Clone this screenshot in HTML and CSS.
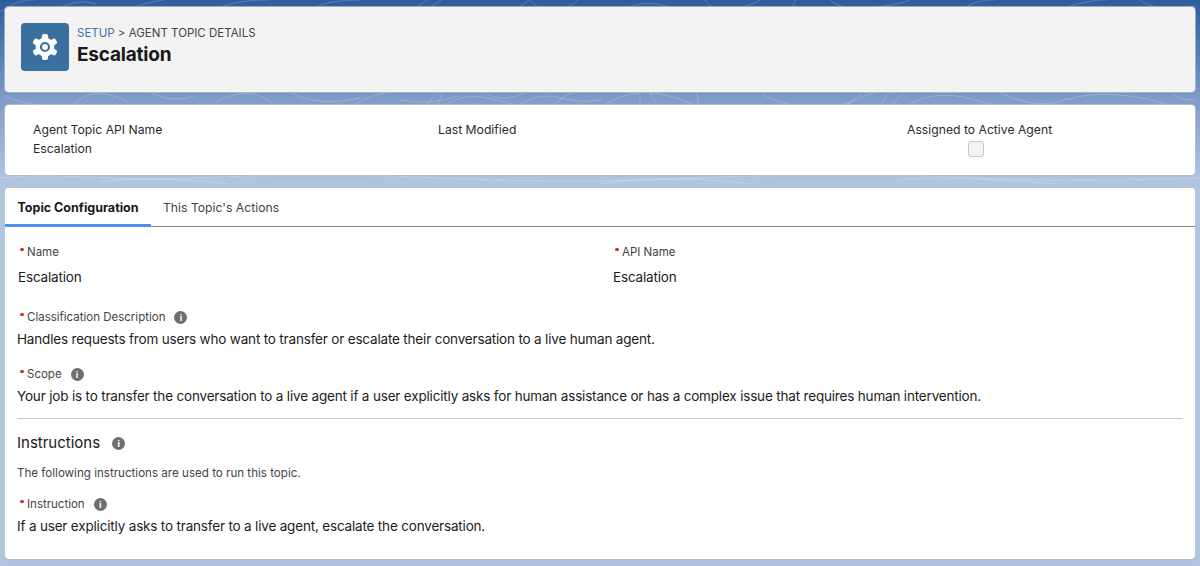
FILE: index.html
```html
<!DOCTYPE html>
<html lang="en">
<head>
<meta charset="utf-8">
<title>Escalation</title>
<link rel="stylesheet" href="styles.css">
</head>
<body>
<svg class="contours" width="1200" height="190" viewBox="0 0 1200 190" fill="none" stroke="#fff" stroke-opacity=".2">
  <path d="M0 12C12 4 20 0 34 0M60 8C70 2 84 0 96 4M130 12c8-8 20-10 34-12M220 8c10-6 30-8 50-8M310 10c14-8 30-10 50-10M410 12c8-6 14-10 18-12M424 12c8-6 14-10 18-12M515 12c4-4 10-10 14-12M530 0c4 6 12 10 22 10s20-4 26-10M620 12c14-8 24-10 36-8s20 4 30 8M705 0c6 8 14 12 26 10s20-6 30-10M790 12c2-4 4-8 6-12M830 0c10 8 24 10 40 8s30-4 40-8M960 12c8-8 20-12 34-12M1060 10c14-6 30-10 46-10M1140 0c10 8 30 10 56 6"/>
  <path d="M400 100c20 4 40 2 58-4M425 108c6-8 10-14 14-20M436 108c4-8 6-14 8-20M443 108c10-10 26-14 44-10s28 6 34 10M486 92c6 8 26 8 40 0M515 108c16-12 30-14 46-10s28 4 40 2M552 108c6-8 14-14 24-16M600 108c20-14 40-18 60-14s26 8 42 14M650 92c2 6 6 10 8 14M640 92v16M695 92c4 4 4 12 0 16M760 92c20 16 70 20 96 8s32-8 40-8M842 108c12-8 18-14 20-16M880 108c2-6 6-12 10-16M890 108c6-8 10-12 14-16M905 108c14-12 38-16 62-10s26 6 34 10M1000 92c20 12 50 16 68 6M1066 100c24-8 60-8 100 4M1170 92c6 6 16 8 25 8"/>
  <path d="M6 96c12 6 26 10 40 8M70 108c8-10 20-16 34-14s22 6 30 14M150 92c10 6 26 10 44 4M210 108c8-8 16-12 30-14s26 2 34 12M290 92c16 10 40 12 70 6M350 108c8-6 20-14 44-16"/>
  <path d="M0 178c60-6 120 4 200 0s160-4 240 0 180 4 260 0 200-4 280 0 160 2 220 0"/>
  <path d="M100 182c40-6 90-2 130 2M600 184c50-8 100-6 150 0M900 180c40-4 100 0 160 4"/>
</svg>
<main class="page">
  <header class="card head">
    <div class="tile">
      <svg width="30" height="30" viewBox="-15 -15 30 30" aria-hidden="true">
        <g fill="#fff">
          <circle r="9.400"/>
          <rect x="-3.100" y="-13" width="6.200" height="7" rx="2.200"/>
          <rect x="-3.100" y="-13" width="6.200" height="7" rx="2.200" transform="rotate(60)"/>
          <rect x="-3.100" y="-13" width="6.200" height="7" rx="2.200" transform="rotate(120)"/>
          <rect x="-3.100" y="-13" width="6.200" height="7" rx="2.200" transform="rotate(180)"/>
          <rect x="-3.100" y="-13" width="6.200" height="7" rx="2.200" transform="rotate(240)"/>
          <rect x="-3.100" y="-13" width="6.200" height="7" rx="2.200" transform="rotate(300)"/>
        </g>
        <circle r="4" fill="none" stroke="#3b6fa0" stroke-width="2.200"/>
      </svg>
    </div>
    <div class="head-text">
      <div class="crumbs"><span class="crumb-link">SETUP</span> &gt; AGENT TOPIC DETAILS</div>
      <h1 class="title">Escalation</h1>
    </div>
  </header>

  <section class="card details">
    <div class="detail detail-api"><div>Agent Topic API Name</div><div class="detail-value">Escalation</div></div>
    <div class="detail detail-mod"><div>Last Modified</div></div>
    <div class="detail detail-active"><div>Assigned to Active Agent</div><span class="check"></span></div>
  </section>

  <section class="card config">
    <nav class="tabs">
      <div class="tab tab-active">Topic Configuration</div>
      <div class="tab">This Topic's Actions</div>
    </nav>
    <div class="body">
      <div class="two-col">
        <div class="field-top">
          <div class="label"><span class="req"></span>Name</div>
          <div class="value value-name">Escalation</div>
        </div>
        <div class="field-top">
          <div class="label"><span class="req"></span>API Name</div>
          <div class="value value-name">Escalation</div>
        </div>
      </div>
      <div class="field field-class">
        <div class="label"><span class="req"></span>Classification Description<span class="info">i</span></div>
        <div class="value">Handles requests from users who want to transfer or escalate their conversation to a live human agent.</div>
      </div>
      <div class="field field-scope">
        <div class="label"><span class="req"></span>Scope<span class="info">i</span></div>
        <div class="value">Your job is to transfer the conversation to a live agent if a user explicitly asks for human assistance or has a complex issue that requires human intervention.</div>
      </div>
      <hr class="rule">
      <h2 class="section-title">Instructions<span class="info info-wide">i</span></h2>
      <p class="hint">The following instructions are used to run this topic.</p>
      <div class="field field-ins">
        <div class="label"><span class="req"></span>Instruction<span class="info">i</span></div>
        <div class="value">If a user explicitly asks to transfer to a live agent, escalate the conversation.</div>
      </div>
    </div>
  </section>
</main>
</body>
</html>
```
FILE: styles.css
```css
* { box-sizing: border-box; }
html, body { margin: 0; height: 100%; }
body {
  position: relative;
  overflow: hidden;
  font-family: Inter, "Liberation Sans", sans-serif;
  font-size: 12.200px;
  line-height: 18px;
  color: #2b2b2b;
  background: linear-gradient(180deg, #2d5c9e 0, #5a82b8 60px, #7f9dc8 100px, #b0c4e0 180px, #b0c4e0 100%);
}
.contours { position: absolute; left: 0; top: 0; }
.page {
  position: relative;
  display: flex;
  flex-direction: column;
  gap: 13px;
  padding: 7px 5px 0;
}
.card {
  background: #fff;
  border-radius: 4px;
  box-shadow: 0 0 0 1px rgba(190,195,205,.75), 0 1px 1px rgba(60,70,90,.2);
}
.head {
  height: 85px;
  background: #f3f3f3;
  display: flex;
  align-items: flex-start;
  padding: 16px;
  gap: 8px;
}
.tile {
  width: 48px; height: 48px;
  border-radius: 4px;
  background: #3b6fa0;
  display: flex; align-items: center; justify-content: center;
}
.head-text { padding-top: 1px; }
.crumbs { font-size: 11.500px; line-height: 18px; color: #444; }
.crumb-link { color: #3f75ad; }
.title { margin: 0; font-size: 19px; line-height: 25px; font-weight: 700; color: #181818; letter-spacing: -.2px; }
.details { height: 70px; display: flex; padding-top: 16px; }
.detail-api { margin-left: 28px; width: 405px; }
.detail-value { margin-top: 1px; }
.detail-mod { width: 405px; }
.detail-active { margin-left: 64px; display: flex; flex-direction: column; align-items: center; }
.check {
  width: 16px; height: 16px; margin: 2px 8px 0 0;
  border: 1px solid #c9c9c9; border-radius: 3px; background: #f3f3f3;
}
.config { height: 371px; }
.tabs { display: flex; height: 39px; border-bottom: 1px solid #8a8a8a; }
.tab { padding: 11px 12px 0; font-size: 12.200px; color: #444; height: 39px; white-space: nowrap; }
.tab-active { font-size: 12.500px; font-weight: 700; color: #181818; width: 146px; border-bottom: 3px solid #4f8ff0; }
.tab:first-child { padding-left: 12.500px; }
.body { padding: 0 12px; }
.two-col { display: flex; padding-top: 16px; }
.field-top { flex: 0 0 595px; }
.label { font-size: 11.500px; line-height: 18px; color: #444; display: flex; align-items: center; padding-left: 3px; }
.req {
  width: 3.500px; height: 3.500px; margin-right: 3.500px; margin-bottom: 5px;
  border-radius: 50%; background: #c8322d; flex: none;
}
.value { font-size: 13.500px; line-height: 20px; letter-spacing: -.18px; color: #1c1c1c; }
.value-name { margin: 6px 0 0 1px; }
.field-class { margin-top: 21px; }
.field-class .value { margin-top: 3px; }
.field-scope { margin-top: 16px; }
.field-scope .value { margin-top: 3px; }
.info {
  width: 13px; height: 13px; margin-left: 9px;
  border-radius: 50%;
  background: #6f6f6f; color: #fff;
  font-size: 9px; line-height: 13px; font-weight: 700; text-align: center;
  flex: none; display: inline-block;
}
.rule { margin: 12px 0 0; border: 0; border-top: 1px solid #c9c9c9; }
.section-title { margin: 13px 0 0; font-size: 15px; line-height: 22px; font-weight: 400; display: flex; align-items: center; color: #181818; }
.info-wide { margin-left: 12px; }
.hint { margin: 10px 0 0; font-size: 11.600px; line-height: 18px; color: #444; }
.field-ins { margin-top: 13px; }
.field-ins .value { margin-top: 3px; }
```
